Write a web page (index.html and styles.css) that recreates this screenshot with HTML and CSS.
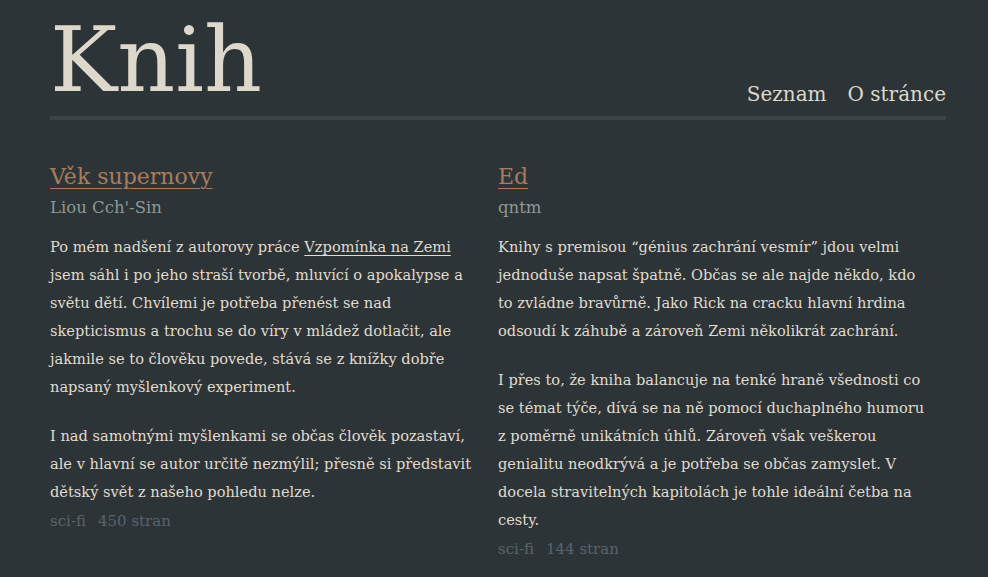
FILE: index.html
```html
<!DOCTYPE html>
<html lang="cs">
<head>
<meta charset="utf-8">
<title>Knih</title>
<link rel="stylesheet" href="styles.css">
</head>
<body>
<div class="page">
  <header class="header">
    <h1 class="logo">Knih</h1>
    <nav class="nav">
      <a class="nav-link" href="#">Seznam</a>
      <a class="nav-link" href="#">O stránce</a>
    </nav>
  </header>
  <main class="books">
    <article class="book">
      <h2 class="book-title"><a href="#">Věk supernovy</a></h2>
      <div class="book-author">Liou Cch'-Sin</div>
      <p class="book-text">Po mém nadšení z autorovy práce <a class="inline-link" href="#">Vzpomínka na Zemi</a> jsem sáhl i po jeho straší tvorbě, mluvící o apokalypse a světu dětí. Chvílemi je potřeba přenést se nad skepticismus a trochu se do víry v mládež dotlačit, ale jakmile se to člověku povede, stává se z knížky dobře napsaný myšlenkový experiment.</p>
      <p class="book-text">I nad samotnými myšlenkami se občas člověk pozastaví, ale v hlavní se autor určitě nezmýlil; přesně si představit dětský svět z našeho pohledu nelze.</p>
      <div class="book-meta"><span>sci-fi</span><span>450 stran</span></div>
    </article>
    <article class="book">
      <h2 class="book-title"><a href="#">Ed</a></h2>
      <div class="book-author">qntm</div>
      <p class="book-text">Knihy s premisou “génius zachrání vesmír” jdou velmi jednoduše napsat špatně. Občas se ale najde někdo, kdo to zvládne bravůrně. Jako Rick na cracku hlavní hrdina odsoudí k záhubě a zároveň Zemi několikrát zachrání.</p>
      <p class="book-text">I přes to, že kniha balancuje na tenké hraně všednosti co se témat týče, dívá se na ně pomocí duchaplného humoru z poměrně unikátních úhlů. Zároveň však veškerou genialitu neodkrývá a je potřeba se občas zamyslet. V docela stravitelných kapitolách je tohle ideální četba na cesty.</p>
      <div class="book-meta"><span>sci-fi</span><span>144 stran</span></div>
    </article>
  </main>
</div>
</body>
</html>
```

FILE: styles.css
```css
html, body {
  margin: 0;
  padding: 0;
  background: #2c3438;
}
body {
  font-family: "DejaVu Serif", "Liberation Serif", serif;
  color: #ddd8cb;
}
.page {
  width: 896px;
  padding: 0 42px 0 50px;
}
.header {
  display: flex;
  justify-content: space-between;
  align-items: flex-end;
  border-bottom: 4px solid #3c4447;
  height: 120px;
  box-sizing: border-box;
}
.logo {
  margin: 0 0 -4px;
  font-weight: normal;
  font-size: 90px;
  line-height: 120px;
  color: #ddd8cb;
}
.nav {
  display: flex;
  gap: 21px;
  padding-bottom: 10px;
}
.nav-link {
  color: #ddd8cb;
  text-decoration: none;
  font-size: 20px;
  line-height: 24px;
}
.books {
  display: grid;
  grid-template-columns: 424px 432px;
  column-gap: 24px;
  padding-top: 42px;
}
.book-title {
  margin: 0;
  font-weight: normal;
  font-size: 22px;
  line-height: 30px;
}
.book-title a {
  color: #a97c5e;
  text-decoration: underline;
  text-decoration-thickness: 1px;
  text-underline-offset: 4px;
}
.book-author {
  font-size: 16.5px;
  line-height: 26px;
  padding-top: 3px;
  color: #8e9894;
}
.book-text {
  font-size: 14.6px;
  line-height: 28px;
  margin: 12px 0 21px;
  color: #e0dbcd;
}
.book-text + .book-text {
  margin-top: 0;
  margin-bottom: 0;
}
.inline-link {
  color: #e0dbcd;
  text-decoration: underline;
  text-underline-offset: 3px;
}
.book-meta {
  font-size: 15px;
  line-height: 30px;
  color: #58656b;
  display: flex;
  gap: 12px;
}
```
